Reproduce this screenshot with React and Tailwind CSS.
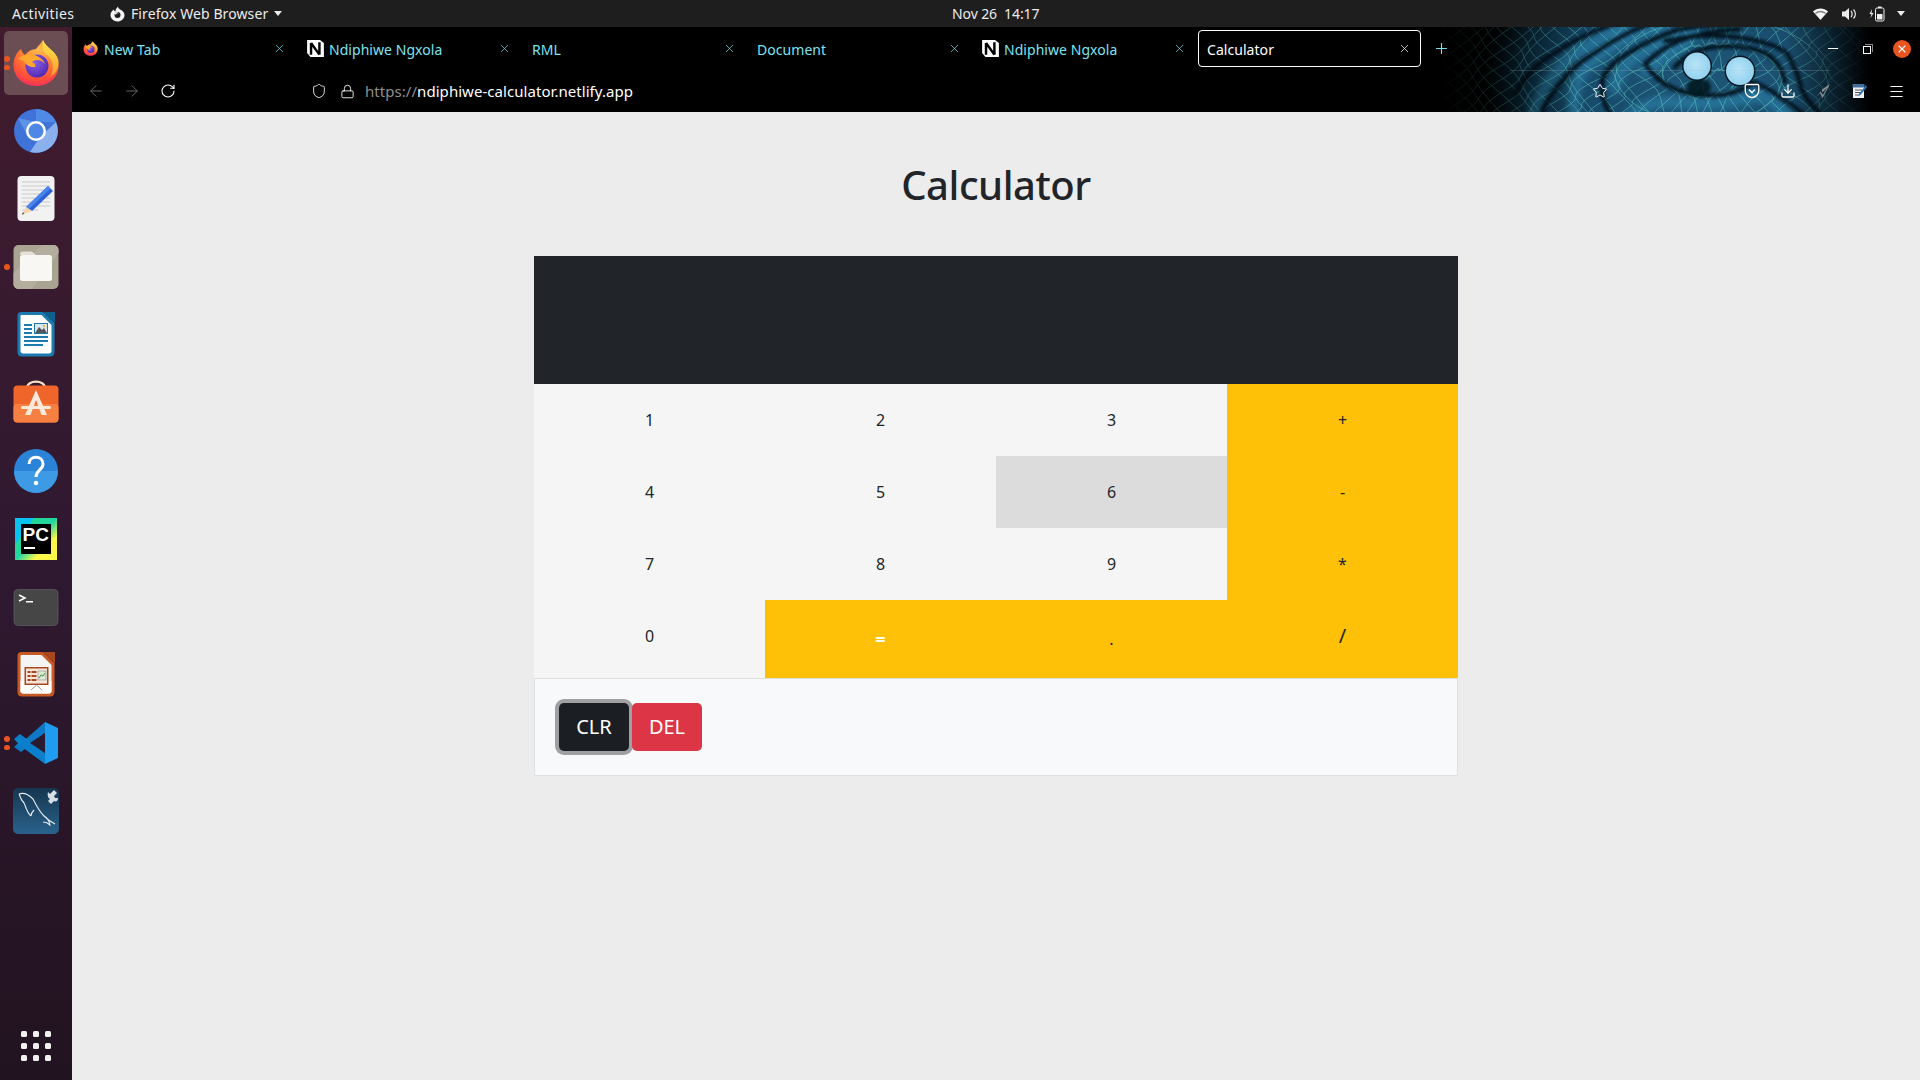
import React from "react";
import { ArrowLeft, ArrowRight, RotateCw, Shield, Lock, Star, Download, Menu, X, Plus } from "lucide-react";

const UI = { fontFamily: '"Noto Sans", "Open Sans", sans-serif' };

function meshLines() {
  const cx = 270, cy = 50;
  const warp = (x, y) => {
    const dx = x - cx, dy = (y - cy) * 1.8;
    const r = Math.sqrt(dx * dx + dy * dy);
    const th = Math.atan2(dy, dx);
    const a = Math.sin(r / 7.5 - th) * Math.max(0, 1 - r / 340) * 9;
    return [x + (dx / (r + 1)) * a, y + (dy / (r + 1)) * a * 0.9];
  };
  const out = [];
  const ang = 0.85, s = 10.5;
  const c = Math.cos(ang), n = Math.sin(ang);
  for (let i = -50; i <= 50; i++) {
    let a = "", b = "";
    for (let j = -50; j <= 50; j += 0.5) {
      const u = i * s, v = j * s;
      const p = warp(cx + u * c - v * n, cy + u * n + v * c);
      const q = warp(cx + v * c - u * n, cy + v * n + u * c);
      a += (a ? "L" : "M") + p[0].toFixed(1) + " " + p[1].toFixed(1);
      b += (b ? "L" : "M") + q[0].toFixed(1) + " " + q[1].toFixed(1);
    }
    out.push(a, b);
  }
  return out;
}
const MESH = meshLines();

function Banner() {
  const gaps = [
    "M75 67 Q90 40 113 27 Q140 9 170 -2",
    "M100 90 Q108 70 120 57 Q133 38 153 27 Q180 8 207 -2",
    "M172 90 Q158 70 163 50 Q172 35 187 27 Q210 12 237 3 Q260 -2 285 -3",
    "M205 37 Q218 24 233 17 Q260 4 300 2",
    "M205 37 Q218 56 237 63 Q262 71 287 67 Q305 63 313 55 Q330 62 340 70 Q355 80 367 90",
    "M225 14 Q270 4 313 13 Q340 19 347 27 Q357 42 360 57 Q365 75 385 90",
    "M235 40 Q252 22 275 20 Q305 17 325 26 Q342 36 345 55",
  ];
  const ridges = [
    "M92 90 Q100 60 125 35 Q150 14 185 0",
    "M135 90 Q130 65 142 45 Q160 25 190 10 Q205 3 225 -2",
    "M175 62 Q178 42 198 28 Q220 12 255 6",
    "M190 90 Q205 72 245 76 Q280 80 318 68 Q335 75 350 90",
    "M205 45 Q225 28 250 12",
  ];
  return (
    <svg className="absolute right-0 top-0" width="480" height="85" viewBox="0 0 480 85">
      <defs>
        <radialGradient id="glow" cx="270" cy="50" r="230" gradientUnits="userSpaceOnUse" gradientTransform="translate(0 18) scale(1 .65)">
          <stop offset="0" stopColor="#1e5678" />
          <stop offset=".55" stopColor="#184a6a" />
          <stop offset=".82" stopColor="#0c3046" />
          <stop offset="1" stopColor="#000" />
        </radialGradient>
        <linearGradient id="fadeL" x1="0" x2="1">
          <stop offset="0" stopColor="#000" />
          <stop offset="1" stopColor="#000" stopOpacity="0" />
        </linearGradient>
        <linearGradient id="fadeR" x1="0" x2="1">
          <stop offset="0" stopColor="#000" stopOpacity="0" />
          <stop offset="1" stopColor="#000" />
        </linearGradient>
        <radialGradient id="ball" cx=".45" cy=".45" r=".6">
          <stop offset="0" stopColor="#b8e4f8" />
          <stop offset="1" stopColor="#8fd0ee" />
        </radialGradient>
        <filter id="bl"><feGaussianBlur stdDeviation="1.6" /></filter>
        <filter id="bl3"><feGaussianBlur stdDeviation="4" /></filter>
      </defs>
      <rect width="480" height="85" fill="#000" />
      <rect width="480" height="85" fill="url(#glow)" />
      <g stroke="#2f86b0" fill="none" strokeLinecap="round" filter="url(#bl3)" strokeWidth="10" opacity=".75">
        {ridges.map((d, i) => <path key={i} d={d} />)}
      </g>
      <g stroke="#62d4c6" strokeWidth=".8" fill="none" opacity=".6">
        {MESH.map((d, i) => <path key={i} d={d} />)}
      </g>
      <g stroke="#020e18" fill="none" strokeLinecap="round" filter="url(#bl)" opacity=".9" strokeWidth="4.5">
        {gaps.map((d, i) => <path key={i} d={d} />)}
      </g>
      <rect width="140" height="85" fill="url(#fadeL)" />
      <rect x="345" width="85" height="85" fill="url(#fadeR)" />
      <rect x="430" width="50" height="85" fill="#000" />
      <ellipse cx="259" cy="60" rx="12" ry="9" fill="#06121c" filter="url(#bl)" opacity=".85" />
      <circle cx="257" cy="39" r="15" fill="#061722" />
      <circle cx="300" cy="44" r="15.5" fill="#061722" />
      <circle cx="257" cy="39" r="13.5" fill="url(#ball)" />
      <circle cx="300" cy="44" r="14" fill="url(#ball)" />
      <rect x="70" y="43" width="320" height="1" fill="#a8b8c0" opacity=".22" />
    </svg>
  );
}

function FirefoxLogo({ size = 48 }) {
  return (
    <svg width={size} height={size} viewBox="0 0 48 48">
      <defs>
        <radialGradient id="ffb" cx=".55" cy=".2" r=".95">
          <stop offset="0" stopColor="#ffbd4f" />
          <stop offset=".45" stopColor="#ff7a32" />
          <stop offset=".72" stopColor="#ff4a3c" />
          <stop offset="1" stopColor="#e31587" />
        </radialGradient>
        <linearGradient id="ffy" x1="0" y1="0" x2="0" y2="1">
          <stop offset="0" stopColor="#ffe84b" />
          <stop offset="1" stopColor="#ff9a2e" />
        </linearGradient>
        <radialGradient id="ffp" cx=".4" cy=".35" r=".8">
          <stop offset="0" stopColor="#8a5fe8" />
          <stop offset="1" stopColor="#4a1fa8" />
        </radialGradient>
      </defs>
      <path d="M31 1C33 8 45 12 46.5 26C47 38 37 47 24 47C11 47 1.500 38 1.500 26C1.500 19 5 13 9 10C10 13 11 15 13 16C16 12 20 10 24 10C27 6 29 4 31 1Z" fill="url(#ffb)" />
      <path d="M31 1C30 8 30 12 36 17C42 22 42 32 38 38C45 34 48 27 46 20C44 12 34 9 31 1Z" fill="url(#ffy)" />
      <circle cx="25" cy="27" r="11.500" fill="url(#ffp)" />
      <path d="M6 20C11 15 19 14 25 17C29 19 32 22 33 25C29 20 23 20 20 23C23 24 24 26 23 28C17 28 14 26 12 22C10 21 8 21 6 20Z" fill="#ffa92e" />
    </svg>
  );
}

const Chrome = () => (
  <svg width="48" height="48" viewBox="0 0 48 48">
    <circle cx="24" cy="24" r="22" fill="#3f73d8" />
    <path d="M24 2A22 22 0 0 1 44 15L24 15Z" fill="#4f8ae6" />
    <path d="M44 15A22 22 0 0 1 18 45L28 30Z" fill="#8ab0ee" />
    <path d="M24 15L6 11L16 30Z" fill="#5c93e4" />
    <circle cx="24" cy="24" r="10" fill="#fff" />
    <circle cx="24" cy="24" r="7.500" fill="#4f87e6" />
  </svg>
);
const Editor = () => (
  <svg width="48" height="48" viewBox="0 0 48 48">
    <rect x="5.500" y="1" width="37" height="45" rx="4" fill="#f2f2f2" />
    <g stroke="#c9c9c9" strokeWidth="1"><path d="M10 7H38M10 11H38M10 15H38M10 19H38M10 23H38M10 27H38M10 31H38M10 35H26" /></g>
    <path d="M36 11L41 16L20 36L14 32Z" fill="#2e62d8" />
    <path d="M36 11L38.500 13.500L17 34L14 32Z" fill="#4a86ee" />
    <path d="M14 32L20 36L10 40Z" fill="#f5d3ad" />
    <path d="M12 38.500L10 40L11 37Z" fill="#333" />
  </svg>
);
const Files = () => (
  <svg width="48" height="48" viewBox="0 0 48 48">
    <rect x="1.500" y="2" width="45" height="44" rx="5" fill="#a9a492" />
    <path d="M1.500 30L30 2H41C44 2 46.500 4 46.500 7V10L20 46H7C4 46 1.500 44 1.500 41Z" fill="#b3ae9d" />
    <path d="M8 11C8 9.500 9 8.500 10.500 8.500H20L24 12H8Z" fill="#e4e1d8" />
    <rect x="8" y="12" width="32" height="26" rx="2.500" fill="#f8f7f4" />
  </svg>
);
const Writer = () => (
  <svg width="48" height="48" viewBox="0 0 48 48">
    <path d="M9 1H31L42.500 12V41C42.500 44 40.500 45.500 38 45.500H10C7 45.500 5.500 44 5.500 41V5C5.500 2.500 7 1 9 1Z" fill="#1b7bb0" />
    <path d="M9 4H29.500L39.500 14V40C39.500 41.500 38.500 42.500 37 42.500H11C9.500 42.500 8.500 41.500 8.500 40V5Z" fill="#fff" />
    <path d="M31 1L43 1V12Z" fill="#0f5f8e" />
    <g fill="#1b7bb0"><rect x="12" y="13" width="8" height="2" /><rect x="12" y="17" width="8" height="2" /><rect x="12" y="21" width="8" height="2" /><rect x="12" y="25" width="24" height="2" /><rect x="12" y="29" width="24" height="2" /><rect x="12" y="33" width="19" height="2" /></g>
    <rect x="22" y="12" width="14" height="11" fill="#1b7bb0" />
    <rect x="23" y="13" width="12" height="9" fill="#dbe8ef" />
    <path d="M23 22L27 16L30 19L32 17L35 22Z" fill="#555" />
    <circle cx="32" cy="15" r="1.200" fill="#e8b93c" />
  </svg>
);
const Software = () => (
  <svg width="48" height="48" viewBox="0 0 48 48">
    <path d="M15 9C15 0.500 33 0.500 33 9" fill="none" stroke="#f8dfc4" strokeWidth="2.200" />
    <rect x="1.500" y="6.500" width="45" height="37" rx="4" fill="#f0662a" />
    <rect x="1.500" y="25" width="45" height="18.500" rx="4" fill="#f58042" />
    <path d="M24 11L35 36H29.500L24 21L18.500 36H13Z" fill="#fbeadb" />
    <rect x="9" y="27" width="30" height="3" rx="1.500" fill="#fbeadb" />
  </svg>
);
const Help = () => (
  <svg width="48" height="48" viewBox="0 0 48 48">
    <circle cx="24" cy="24" r="22" fill="#2a83d6" />
    <path d="M2 24H46A22 22 0 0 1 2 24Z" fill="#3e9ae4" />
    <path d="M17 17C17 8 31 8 31 17C31 23 24 23 24 30" fill="none" stroke="#fff" strokeWidth="3" />
    <circle cx="24" cy="36" r="2.200" fill="#fff" />
  </svg>
);
const PyCharm = () => (
  <svg width="48" height="48" viewBox="0 0 48 48">
    <defs>
      <linearGradient id="pc" x1="0" y1="0" x2="1" y2="1">
        <stop offset="0" stopColor="#21d789" />
        <stop offset=".5" stopColor="#21d7a0" />
        <stop offset=".72" stopColor="#fcf84a" />
        <stop offset="1" stopColor="#fcf84a" />
      </linearGradient>
    </defs>
    <rect x="3" y="3" width="42" height="42" fill="url(#pc)" />
    <path d="M3 3H22L3 30Z" fill="#07c3f2" />
    <rect x="9" y="9" width="30" height="30" fill="#000" />
    <text x="10.500" y="26" fill="#fff" fontSize="19" fontWeight="700" style={{ fontFamily: '"Liberation Sans", sans-serif' }}>PC</text>
    <rect x="12" y="32" width="11" height="2" fill="#fff" />
  </svg>
);
const Terminal = () => (
  <svg width="48" height="48" viewBox="0 0 48 48">
    <rect x="2" y="6.500" width="44" height="36" rx="4" fill="#464646" stroke="#5a5a5a" strokeWidth=".8" />
    <path d="M7 12L13 15L7 18" fill="none" stroke="#fff" strokeWidth="1.500" />
    <rect x="14" y="18" width="7" height="1.500" fill="#fff" />
  </svg>
);
const Impress = () => (
  <svg width="48" height="48" viewBox="0 0 48 48">
    <path d="M9 1H31L42.500 12V41C42.500 44 40.500 45.500 38 45.500H10C7 45.500 5.500 44 5.500 41V5C5.500 2.500 7 1 9 1Z" fill="#c75a24" />
    <path d="M9 4H29.500L39.500 14V40C39.500 41.500 38.500 42.500 37 42.500H11C9.500 42.500 8.500 41.500 8.500 40V5Z" fill="#f4f4f4" />
    <path d="M8.500 30H39.500V40C39.500 41.500 38.500 42.500 37 42.500H11C9.500 42.500 8.500 41.500 8.500 40Z" fill="#fff" />
    <path d="M31 1L43 1V12Z" fill="#a8481c" />
    <rect x="12.500" y="16" width="24" height="18" fill="#a8481c" />
    <rect x="14" y="17.500" width="21" height="15" fill="#f5e6da" />
    <g fill="#a8481c"><rect x="15.500" y="20" width="3" height="2" /><rect x="15.500" y="24" width="3" height="2" /><rect x="15.500" y="28" width="3" height="2" /><rect x="19.500" y="20" width="5" height="2" /><rect x="19.500" y="24" width="5" height="2" /><rect x="19.500" y="28" width="5" height="2" /></g>
    <rect x="26" y="20" width="8" height="9" fill="#dfe8d8" stroke="#777" strokeWidth=".5" />
    <path d="M27 27L29 24L31 25L33 22" fill="none" stroke="#3a9a3a" strokeWidth="1" />
    <path d="M24.500 34L19 39M24.500 34L30 39" stroke="#999" strokeWidth="1" />
  </svg>
);
const VSCode = () => (
  <svg width="48" height="48" viewBox="0 0 48 48">
    <path d="M33 3L46 9V39L33 45Z" fill="#1f9cf0" />
    <path d="M33 3V14L9 33L2 28L8 22L15 19Z" fill="#0e78c4" />
    <path d="M2 20L8 15L33 34V45L8 26.500Z" fill="#0a7fcb" />
    <path d="M33 14L18 24L33 34Z" fill="#2a1a30" />
  </svg>
);
const MySQL = () => (
  <svg width="48" height="48" viewBox="0 0 48 48">
    <defs>
      <linearGradient id="my" x1="0" y1="0" x2="0" y2="1">
        <stop offset="0" stopColor="#16364f" />
        <stop offset="1" stopColor="#2a628c" />
      </linearGradient>
    </defs>
    <rect x="1" y="1" width="46" height="46" rx="5" fill="url(#my)" />
    <path d="M7 7C12 5 17 8 21 12C24 18 27 24 32 29C35 32 39 35 43 37M7 7C8 10 9 13 12 16C14 20 15 26 19 29M19 29C19 26 21 24 22 23M34 30C36 33 38 35 38 38C36 36 33 35 31 35" fill="none" stroke="#e6edf2" strokeWidth="1.100" />
    <path d="M42 3L38 7L36 5C35 8 36 11 38 12L36 14L39 17L42 14C44 15 46 14 46 11L43 11L42 9L45 6Z" fill="#d8dfe4" />
  </svg>
);

const Dock = [
  [<FirefoxLogo />, 2, true],
  [<Chrome />, 0],
  [<Editor />, 0],
  [<Files />, 1],
  [<Writer />, 0],
  [<Software />, 0],
  [<Help />, 0],
  [<PyCharm />, 0],
  [<Terminal />, 0],
  [<Impress />, 0],
  [<VSCode />, 2],
  [<MySQL />, 0],
];

function DockItem({ icon, dots, active }) {
  return (
    <div className="relative flex h-[68px] w-[72px] shrink-0 items-center justify-center">
      {active && <div className="absolute inset-x-[4px] inset-y-[2px] rounded-[5px] bg-[#6b4e54]" />}
      <div className="relative">{icon}</div>
      {dots > 0 && (
        <div className="absolute left-[4px] top-0 flex h-full flex-col justify-center gap-[3px]">
          {dots === 2 && <span className="size-[5.500px] rounded-full bg-[#e95420]" />}
          <span className="size-[5.500px] rounded-full bg-[#e95420]" />
        </div>
      )}
    </div>
  );
}

const NLogo = () => (
  <svg width="19" height="19" viewBox="0 0 17 17" className="shrink-0">
    <path d="M1 1H12.500L16 3.500V16H4L1 12.500Z" fill="#fff" />
    <path d="M4.500 3.500V14M4.500 3.500L12 14M12 3V14" stroke="#000" strokeWidth="2.200" fill="none" />
  </svg>
);

function Tab({ title, icon, active }) {
  return (
    <div
      className={
        active
          ? "-ml-px flex h-[37px] w-[223px] shrink-0 items-center rounded-[4px] border border-white pl-[8px] pr-[9px] text-white"
          : "flex h-[37px] w-[225px] shrink-0 items-center pl-[8px] pr-[13px] text-[#7fe3ee]"
      }
    >
      {icon && <span className="mr-[6px] flex w-[16px] items-center justify-center">{icon}</span>}
      <span className="pt-[2px] text-[14px] leading-none tracking-[0.05px]">{title}</span>
      <X size={13} strokeWidth={1.3} className="ml-auto" />
    </div>
  );
}

const Pocket = () => (
  <svg width="16" height="16" viewBox="0 0 16 16" fill="none" stroke="#fff" strokeWidth="1.300">
    <path d="M2.500 1.500H13.500C14.300 1.500 14.800 2 14.800 2.800V7.500C14.800 11.500 11.500 14.500 8 14.500C4.500 14.500 1.200 11.500 1.200 7.500V2.800C1.200 2 1.700 1.500 2.500 1.500Z" />
    <path d="M5 6.500L8 9.500L11 6.500" />
  </svg>
);
const Bolt = () => (
  <svg width="16" height="16" viewBox="0 0 16 16">
    <path d="M15 1L7 6.500L7 9.500L12 5L8 12L5.500 8.500L1 14.500L5 10L7.500 15L11 8.500Z" fill="#8b8f92" />
  </svg>
);
const Notes = () => (
  <svg width="16" height="16" viewBox="0 0 16 16">
    <rect x="2" y="2" width="11" height="13" fill="#f0f2f4" />
    <rect x="1.500" y="1" width="12" height="3.500" fill="#3f6f9a" />
    <path d="M4 7H11M4 9.500H11M4 12H8" stroke="#555" strokeWidth="1" />
    <path d="M15 2L8 11L7.500 13L9.500 12L16 4Z" fill="#2c6fb5" />
  </svg>
);
const Wifi = () => (
  <svg width="17" height="14" viewBox="0 0 16 14">
    <path d="M0.500 4.500C4.500 0.500 11.500 0.500 15.500 4.500L8 13Z" fill="#f4f4f4" />
    <path d="M3.500 7C6 5 10 5 12.500 7L13.500 6C10.500 3 5.500 3 2.500 6Z" fill="#1e1e1e" opacity=".5" />
  </svg>
);
const Vol = () => (
  <svg width="16" height="14" viewBox="0 0 16 14">
    <path d="M1 4.500H4L8 1V13L4 9.500H1Z" fill="#ececec" />
    <path d="M10 4C11.500 5.500 11.500 8.500 10 10M12.500 2.500C15 5 15 9 12.500 11.500" fill="none" stroke="#ececec" strokeWidth="1.200" />
  </svg>
);
const Batt = () => (
  <svg width="16" height="16" viewBox="0 0 16 16">
    <path d="M3 3L0.500 8H2.500L1.500 12L4.500 7H2.500Z" fill="#f0f0f0" />
    <rect x="6.500" y="2" width="8.500" height="13" rx="1.500" fill="none" stroke="#f0f0f0" strokeWidth="1" />
    <rect x="9" y="0.500" width="3.500" height="1.500" fill="#f0f0f0" />
    <rect x="8" y="8" width="5.500" height="5.500" fill="#f0f0f0" />
  </svg>
);
const Caret = () => <span className="size-0 border-x-[4.500px] border-t-[5px] border-x-transparent border-t-[#ececec]" />;

const Cell = ({ children, tone = "light", extra = "" }) => {
  const tones = {
    light: "bg-[#f5f5f5] text-[#212529]",
    hover: "bg-[#dcdcdc] text-[#212529]",
    yellow: "bg-[#ffc107] text-[#212529]",
  };
  return <div className={"flex items-center justify-center text-[16px] " + tones[tone] + " " + extra}>{children}</div>;
};

export default function App() {
  return (
    <div className="flex h-[1080px] w-[1920px] flex-col overflow-hidden bg-[#ececec]" style={UI}>
      <header className="flex h-[27px] shrink-0 items-center bg-[#1e1e1e] text-[14px] text-[#ececec]">
        <span className="ml-[12px] w-[97px] tracking-[0.4px]">Activities</span>
        <svg width="16" height="16" viewBox="0 0 16 16" className="mr-[6px]">
          <path d="M9 0.500C9 2 10 2.500 11 3.500C14 4.500 15.500 7 15.500 9C15.500 13 12 15.500 8.500 15.500C4.500 15.500 1.500 12.500 1.500 9C1.500 6.500 3 4.500 5 3.500C5 4.500 5.500 5.500 6.500 5.500C6.500 3.500 7.500 2 9 0.500Z" fill="#f4f4f4" />
          <circle cx="8.500" cy="9" r="3" fill="#1e1e1e" />
          <path d="M5 7C6.500 6 9 6 10 7.500C8.500 7 7 7.500 7 9Z" fill="#f4f4f4" />
        </svg>
        <span className="w-[143px] whitespace-nowrap tracking-[0.1px]">Firefox Web Browser</span>
        <Caret />
        <span className="ml-[670px] whitespace-pre tracking-[-0.1px]">Nov 26  14:17</span>
        <div className="ml-auto mr-[15px] flex items-center gap-[12px]">
          <Wifi />
          <Vol />
          <Batt />
          <Caret />
        </div>
      </header>
      <div className="flex min-h-0 flex-1">
        <aside className="flex w-[72px] shrink-0 flex-col bg-gradient-to-b from-[#421b2d] via-[#2f1931] to-[#221320] pt-[2px]">
          {Dock.map(([icon, dots, active], i) => (
            <DockItem key={i} icon={icon} dots={dots} active={active} />
          ))}
          <div className="mt-auto flex h-[68px] items-center justify-center">
            <div className="grid grid-cols-3 gap-[6px]">
              {Array.from({ length: 9 }).map((_, i) => (
                <span key={i} className="size-[6px] rounded-[1.500px] bg-[#f0f0ee]" />
              ))}
            </div>
          </div>
        </aside>
        <div className="flex min-w-0 flex-1 flex-col">
          <div className="relative h-[85px] shrink-0 bg-black">
            <Banner />
            <div className="relative flex h-[40px] items-center pl-[2px] pt-[3px]">
              <Tab title="New Tab" icon={<FirefoxLogo size={15} />} />
              <Tab title="Ndiphiwe Ngxola" icon={<NLogo />} />
              <Tab title="RML" />
              <Tab title="Document" />
              <Tab title="Ndiphiwe Ngxola" icon={<NLogo />} />
              <Tab title="Calculator" active />
              <Plus size={17} strokeWidth={1.6} className="ml-[12px] text-[#7fe3ee]" />
              <div className="ml-auto mr-[9px] flex items-center text-white">
                <span className="h-px w-[10px] bg-white" />
                <span className="relative ml-[25px] size-[10px]">
                  <span className="absolute bottom-0 left-0 size-[8px] border border-white" />
                  <span className="absolute right-0 top-0 size-[8px] border-r border-t border-[#888]" />
                </span>
                <span className="ml-[20px] flex size-[18px] items-center justify-center rounded-full bg-[#e95420]">
                  <X size={12} strokeWidth={2.2} />
                </span>
              </div>
            </div>
            <div className="relative flex h-[45px] items-center pl-[15px] pr-[15px] pt-[3px] text-white">
              <ArrowLeft size={18} strokeWidth={1.2} className="text-[#6f6f6f]" />
              <ArrowRight size={18} strokeWidth={1.2} className="ml-[18px] text-[#6f6f6f]" />
              <RotateCw size={16} strokeWidth={1.6} className="ml-[19px]" />
              <Shield size={16} strokeWidth={1.3} className="ml-[135px]" />
              <Lock size={15} strokeWidth={1.4} className="ml-[13px]" />
              <span className="ml-[10px] text-[15px] tracking-[0.05px]">
                <span className="text-[#8e8e8e]">https://</span>ndiphiwe-calculator.netlify.app
              </span>
              <Star size={16} strokeWidth={1.5} className="ml-auto" />
              <span className="ml-[136px]"><Pocket /></span>
              <Download size={16} strokeWidth={1.9} className="ml-[20px]" />
              <span className="ml-[19px]"><Bolt /></span>
              <span className="ml-[20px]"><Notes /></span>
              <Menu size={17} strokeWidth={1.5} className="ml-[21px]" />
            </div>
          </div>
          <main className="flex-1 pt-[49px]">
            <h1 className="text-center text-[40px] font-medium leading-[48px] tracking-[-0.45px] text-[#212529]">Calculator</h1>
            <section className="mx-auto mt-[47px] w-[924px]">
              <div className="h-[128px] bg-[#212529]" />
              <div className="grid grid-cols-4 grid-rows-[72px_72px_72px_78px]">
                <Cell>1</Cell>
                <Cell>2</Cell>
                <Cell>3</Cell>
                <Cell tone="yellow">+</Cell>
                <Cell>4</Cell>
                <Cell>5</Cell>
                <Cell tone="hover">6</Cell>
                <Cell tone="yellow">-</Cell>
                <Cell>7</Cell>
                <Cell>8</Cell>
                <Cell>9</Cell>
                <Cell tone="yellow">*</Cell>
                <Cell extra="pb-[7px]">0</Cell>
                <Cell tone="yellow" extra="pt-[1px] font-bold text-white">
                  <span className="text-[18px]">=</span>
                </Cell>
                <Cell tone="yellow">.</Cell>
                <Cell tone="yellow" extra="pb-[7px] text-[20px]">/</Cell>
              </div>
              <div className="flex h-[98px] items-center gap-[3px] border border-[#dfdfdf] bg-[#f8f9fa] pl-[24px]">
                <button className="h-[48px] w-[70px] rounded-[5px] bg-[#1b1f24] text-[20px] text-white ring-4 ring-[#a0a0a2]">CLR</button>
                <button className="h-[48px] w-[70px] rounded-[5px] bg-[#dc3545] text-[20px] text-white">DEL</button>
              </div>
            </section>
          </main>
        </div>
      </div>
    </div>
  );
}
